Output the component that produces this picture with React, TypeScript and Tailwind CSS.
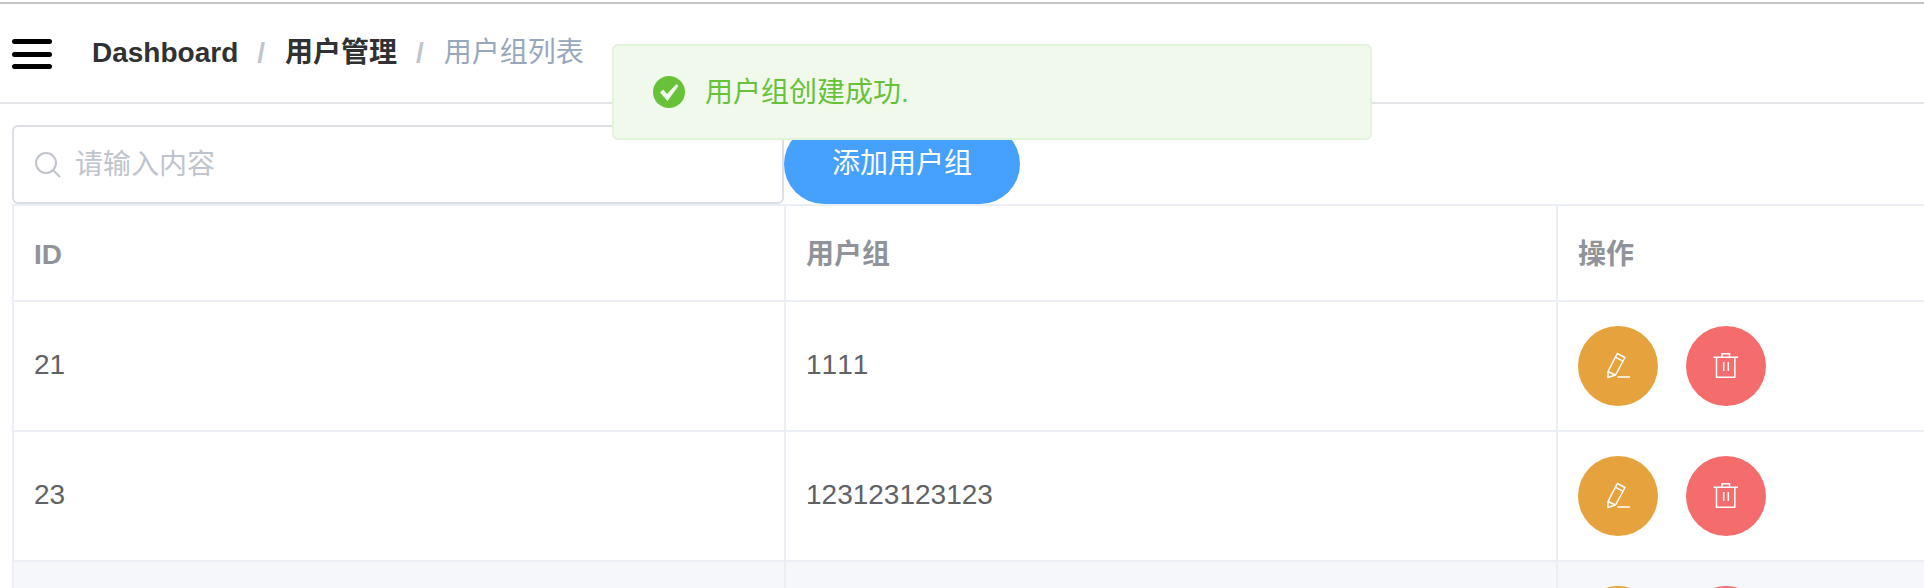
import { useState } from 'react';

type Grupo = {
  id: string;
  nome: string;
};

const grupos: Grupo[] = [
  { id: '21', nome: '1111' },
  { id: '23', nome: '123123123123' },
  { id: '', nome: '' },
];

function EditIcon() {
  return (
    <svg width="28" height="28" viewBox="0 0 28 28" fill="none" stroke="white" strokeWidth="1.5">
      <path d="M4 19.5 13.3 1.5 21 5.5 11.5 23 4 25.5Z" strokeLinejoin="round" />
      <path d="M10.8 4.8 18.8 9.2M4 19.5 11.5 23" />
      <path d="M13.5 25H26" />
    </svg>
  );
}

function TrashIcon() {
  return (
    <svg width="28" height="28" viewBox="0 0 28 28" fill="none" stroke="white" strokeWidth="1.5">
      <path d="M1.5 5.3H26M10 5.3V1.7H17.5V5.3" />
      <path d="M4.5 5.3V25.2H22.8V5.3" />
      <path d="M11.7 10V19M16.3 10V19" />
    </svg>
  );
}

export default function App() {
  const [busca, setBusca] = useState('');

  return (
    <div
      className="relative h-[588px] overflow-hidden bg-white text-[28px] [font-kerning:none]"
      style={{ fontFamily: '"Liberation Sans", "Noto Sans CJK SC", sans-serif' }}
    >
      <div className="h-[4px] border-b-2 border-[#c4c4c4]" />

      <header className="flex h-[100px] items-center border-b-2 border-[#e4e5e8] pl-[12px]">
        <svg width="40" height="30" viewBox="0 0 40 30" className="mt-[2px]">
          <rect x="0" y="0" width="40" height="5" rx="2.5" fill="#000" />
          <rect x="0" y="13" width="40" height="5" rx="2.5" fill="#000" />
          <rect x="0" y="25" width="40" height="5" rx="2.5" fill="#000" />
        </svg>
        <nav className="ml-[40px] flex items-center font-bold text-[#303133]">
          <span>Dashboard</span>
          <span className="ml-[19px] mr-[20px] text-[#c0c4cc]">/</span>
          <span>用户管理</span>
          <span className="ml-[19px] mr-[20px] text-[#c0c4cc]">/</span>
          <span className="font-normal text-[#97a8be]">用户组列表</span>
        </nav>
      </header>

      <div className="flex items-end pl-[12px] pt-[20px]">
        <div className="relative h-[79px] w-[772px]">
          <svg
            width="26"
            height="26"
            viewBox="0 0 26 26"
            fill="none"
            stroke="#c0c4cc"
            strokeWidth="2"
            className="absolute left-[23px] top-[27px]"
          >
            <circle cx="11" cy="11" r="10" />
            <path d="M18 18 25 25" />
          </svg>
          <input
            value={busca}
            onChange={e => setBusca(e.target.value)}
            placeholder="请输入内容"
            className="h-full w-full rounded-[6px] border-2 border-[#dcdfe6] pl-[61px] text-[#606266] outline-none placeholder:text-[#c0c4cc]"
          />
        </div>
        <button className="h-[80px] w-[236px] rounded-[40px] bg-[#46a0fe] text-white">添加用户组</button>
      </div>

      <table className="ml-[12px] w-[1912px] table-fixed border-separate border-spacing-0 border-l-2 border-[#ebeef5]">
        <colgroup>
          <col className="w-[772px]" />
          <col className="w-[772px]" />
          <col />
        </colgroup>
        <thead>
          <tr className="h-[98px] text-left font-bold text-[#909399]">
            {['ID', '用户组', '操作'].map((titulo, i) => (
              <th
                key={titulo}
                className={`border-y-2 border-[#ebeef5] pl-[20px] pt-[4px] ${i < 2 ? 'border-r-2' : ''}`}
              >
                {titulo}
              </th>
            ))}
          </tr>
        </thead>
        <tbody>
          {grupos.map((grupo, i) => (
            <tr key={i} className={`h-[130px] text-[#606266] ${i === 2 ? 'bg-[#f5f7fa]' : ''}`}>
              <td className="border-b-2 border-r-2 border-[#ebeef5] pb-[2px] pl-[20px]">{grupo.id}</td>
              <td className="border-b-2 border-r-2 border-[#ebeef5] pb-[2px] pl-[20px]">{grupo.nome}</td>
              <td className="border-b-2 border-[#ebeef5] pl-[20px]">
                <div className="flex gap-[28px]">
                  <button className="flex h-[80px] w-[80px] items-center justify-center rounded-full bg-[#e6a23c]">
                    <EditIcon />
                  </button>
                  <button className="flex h-[80px] w-[80px] items-center justify-center rounded-full bg-[#f56c6c]">
                    <TrashIcon />
                  </button>
                </div>
              </td>
            </tr>
          ))}
        </tbody>
      </table>

      <div className="absolute left-[612px] top-[44px] flex h-[96px] w-[760px] items-center rounded-[6px] border-2 border-[#e1f3d8] bg-[#f0f9eb] pl-[39px] text-[#67c23a]">
        <svg width="32" height="32" viewBox="0 0 32 32">
          <circle cx="16" cy="16" r="16" fill="#67c23a" />
          <path d="M7 16.5 10 13.5 14 18 23.5 8 25.5 10 14.5 25Z" fill="#f0f9eb" />
        </svg>
        <span className="ml-[20px] pt-[2px]">用户组创建成功.</span>
      </div>
    </div>
  );
}
